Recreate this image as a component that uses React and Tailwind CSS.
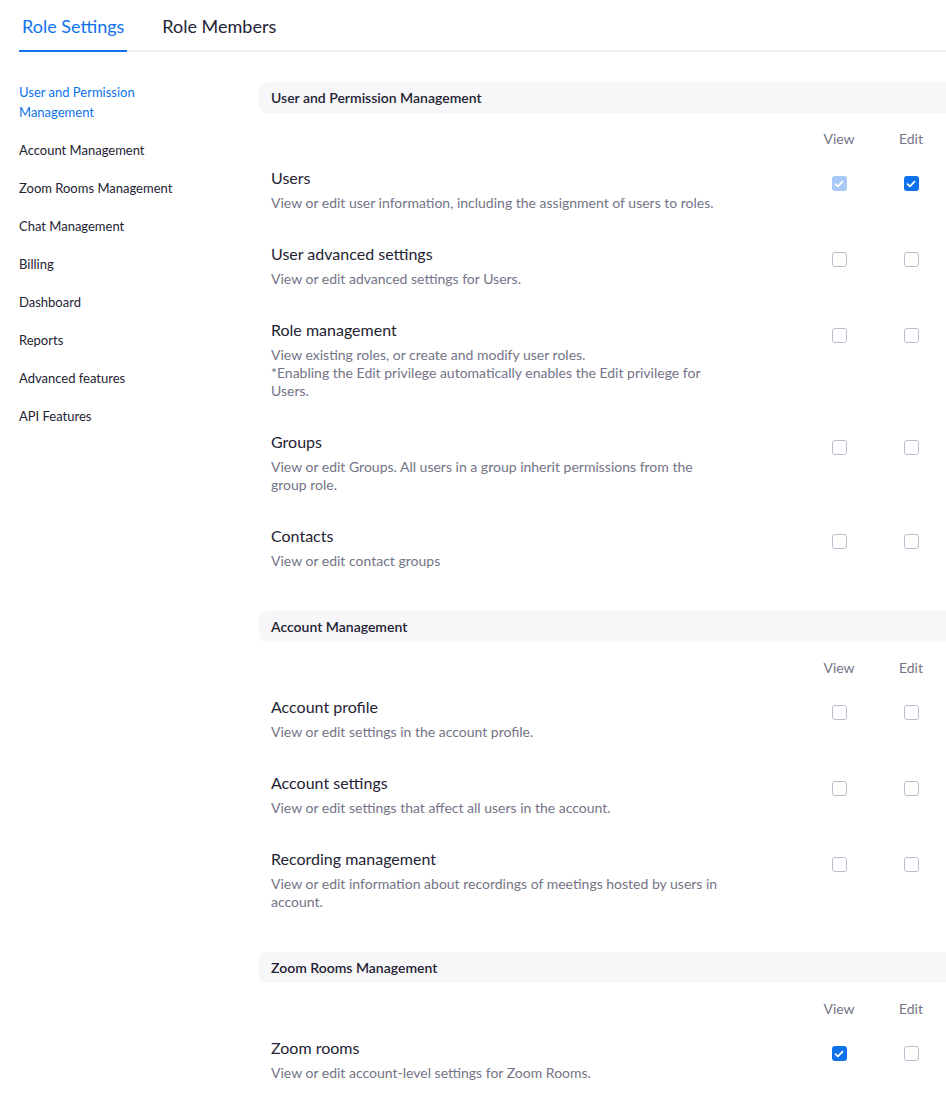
import React from "react";

const sections = [
  {
    title: "User and Permission Management",
    rows: [
      { t: "Users", d: ["View or edit user information, including the assignment of users to roles."], v: "disabled", e: "checked" },
      { t: "User advanced settings", d: ["View or edit advanced settings for Users."] },
      { t: "Role management", d: ["View existing roles, or create and modify user roles.", "*Enabling the Edit privilege automatically enables the Edit privilege for Users."] },
      { t: "Groups", d: ["View or edit Groups. All users in a group inherit permissions from the group role."] },
      { t: "Contacts", d: ["View or edit contact groups"] },
    ],
  },
  {
    title: "Account Management",
    rows: [
      { t: "Account profile", d: ["View or edit settings in the account profile."] },
      { t: "Account settings", d: ["View or edit settings that affect all users in the account."] },
      { t: "Recording management", d: ["View or edit information about recordings of meetings hosted by users in account."] },
    ],
  },
  {
    title: "Zoom Rooms Management",
    rows: [
      { t: "Zoom rooms", d: ["View or edit account-level settings for Zoom Rooms."], v: "checked" },
    ],
  },
];

const side = [
  "User and Permission Management",
  "Account Management",
  "Zoom Rooms Management",
  "Chat Management",
  "Billing",
  "Dashboard",
  "Reports",
  "Advanced features",
  "API Features",
];

function Box({ state }) {
  if (state === "checked" || state === "disabled") {
    return (
      <div
        className={
          "w-[15px] h-[15px] rounded-[3px] flex items-center justify-center " +
          (state === "checked" ? "bg-[#0e72ed]" : "bg-[#a9c9f6]")
        }
      >
        <svg width="10" height="8" viewBox="0 0 10 8" fill="none">
          <path d="M1.5 4.2 L3.9 6.4 L8.5 1.6" stroke="white" strokeWidth="1.8" strokeLinecap="round" strokeLinejoin="round" />
        </svg>
      </div>
    );
  }
  return <div className="w-[15px] h-[15px] rounded-[3px] border border-[#bdbccc] bg-white" />;
}

export default function App() {
  return (
    <div className="w-[946px] min-h-[1098px] bg-white overflow-hidden" style={{ fontFamily: "Lato, 'Open Sans', sans-serif" }}>
      <div className="ml-[19px] flex border-b-2 border-[#f0f0f5]">
        <div className="px-[3px] pt-[14px] pb-[10px] text-[18px] leading-[24px] text-[#0e72ed] border-b-2 border-[#0e72ed] -mb-[2px]">
          Role Settings
        </div>
        <div className="ml-[32px] px-[3px] pt-[14px] pb-[12px] text-[18px] leading-[24px] text-[#232333]">
          Role Members
        </div>
      </div>
      <div className="flex pt-[30px]">
        <div className="w-[259px] shrink-0 pl-[19px]">
          {side.map((s, i) => (
            <div
              key={s}
              className={
                "w-[180px] text-[13px] leading-[20px] mb-[18px] " +
                (i === 0 ? "text-[#0e72ed]" : "text-[#232333]")
              }
            >
              {s}
            </div>
          ))}
        </div>
        <div className="flex-1 min-w-0">
          {sections.map((sec) => (
            <div key={sec.title} className="mb-[29px]">
              <div className="h-[31px] bg-[#f7f7fa] rounded-l-[8px] pl-3 flex items-center text-[14px] font-semibold text-[#232333]">
                {sec.title}
              </div>
              <div className="flex mt-[17px] h-[18px] text-[14px] leading-[18px] text-[#747487] -mr-[1px]">
                <div className="flex-1" />
                <div className="w-[72px] text-center">View</div>
                <div className="w-[72px] text-center">Edit</div>
              </div>
              {sec.rows.map((r) => (
                <div key={r.t} className="flex pt-[18px] pb-[12px] -mr-[1px]">
                  <div className="flex-1 pl-3">
                    <div className="text-[16px] leading-[24px] text-[#232333]">{r.t}</div>
                    <div className="mt-[4px] w-[456px] text-[14px] leading-[18px] text-[#747487]">
                      {r.d.map((l, i) => (
                        <div key={i}>{l}</div>
                      ))}
                    </div>
                  </div>
                  <div className="w-[72px] flex justify-center pt-[10px]">
                    <Box state={r.v} />
                  </div>
                  <div className="w-[72px] flex justify-center pt-[10px]">
                    <Box state={r.e} />
                  </div>
                </div>
              ))}
            </div>
          ))}
        </div>
      </div>
    </div>
  );
}
